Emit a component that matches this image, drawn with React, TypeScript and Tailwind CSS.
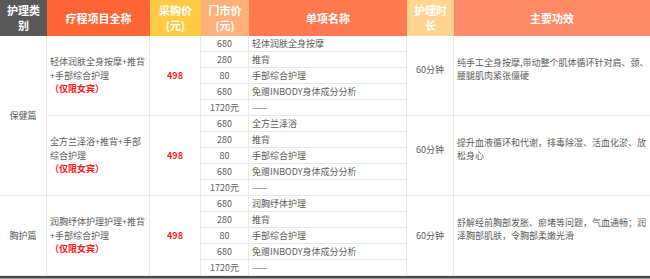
const font = "font-['Noto_Sans_CJK_SC','Noto_Sans',sans-serif]";

interface Group {
  name: string[];
  items: string[];
  prices: string[];
  effect: string[];
  timeUp: boolean;
}

const groups: Group[] = [
  {
    name: ['轻体润肤全身按摩+推背', '+手部综合护理'],
    items: ['轻体润肤全身按摩', '推背', '手部综合护理', '免赠INBODY身体成分分析'],
    prices: ['680', '280', '80', '680'],
    effect: ['纯手工全身按摩,带动整个肌体循环针对肩、颈、', '腰腿肌肉紧张僵硬'],
    timeUp: true,
  },
  {
    name: ['全方兰泽浴+推背+手部', '综合护理'],
    items: ['全方兰泽浴', '推背', '手部综合护理', '免赠INBODY身体成分分析'],
    prices: ['680', '280', '80', '680'],
    effect: ['提升血液循环和代谢，排毒除湿、活血化淤、放', '松身心'],
    timeUp: true,
  },
  {
    name: ['润胸纾体护理护理+推背', '+手部综合护理'],
    items: ['润胸纾体护理', '推背', '手部综合护理', '免赠INBODY身体成分分析'],
    prices: ['680', '280', '80', '680'],
    effect: ['舒解经前胸部发胀、瘀堵等问题，气血通畅；润', '泽胸部肌肤，令胸部柔嫩光滑'],
    timeUp: false,
  },
];

const cell = 'border-b border-r border-[#e8e8e8]';

function Header() {
  const h = 'flex flex-col items-center justify-center text-center text-white font-bold text-[11px] leading-[15px]';
  return (
    <>
      <div className={`${h} bg-[#595959]`}><span>护理类</span><span>别</span></div>
      <div className={`${h} bg-[#ff6535]`}>疗程项目全称</div>
      <div className={`${h} bg-[#ffcb45]`}><span>采购价</span><span>(元)</span></div>
      <div className={`${h} bg-[#ffb07b]`}><span>门市价</span><span>(元)</span></div>
      <div className={`${h} bg-[#ff7a50]`}>单项名称</div>
      <div className={`${h} bg-[#ffd58f]`}><span>护理时</span><span>长</span></div>
      <div className={`${h} bg-[#ff8a68]`}>主要功效</div>
    </>
  );
}

function GroupRows({ g, idx }: { g: Group; idx: number }) {
  const rows = [
    ...g.items.map((it, i) => ({ price: g.prices[i], item: it })),
    { price: '1720元', item: '——' },
  ];
  return (
    <>
      {idx === 0 && (
        <div className={`${cell} row-span-10 flex items-center justify-center`}>保健篇</div>
      )}
      {idx === 2 && (
        <div className={`${cell} row-span-5 flex items-center justify-center`}>胸护篇</div>
      )}
      <div className={`${cell} row-span-5 flex flex-col justify-center pl-[3px] leading-[13.5px]`}>
        <span className="whitespace-nowrap">{g.name[0]}</span>
        <span className="whitespace-nowrap">{g.name[1]}</span>
        <span className="whitespace-nowrap font-bold text-[#ff1a1a]">（仅限女宾）</span>
      </div>
      <div className={`${cell} row-span-5 flex items-center justify-center font-bold text-[#ff1a1a]`}>498</div>
      {rows.map((r, i) => (
        <RowPair key={i} r={r} first={i === 0} g={g} />
      ))}
    </>
  );
}

function RowPair({ r, first, g }: { r: { price: string; item: string }; first: boolean; g: Group }) {
  return (
    <>
      <div className={`${cell} flex items-center justify-center`}>{r.price}</div>
      <div className={`${cell} flex items-center pl-[3px] whitespace-nowrap`}>{r.item}</div>
      {first && (
        <>
          <div className={`${cell} row-span-5 flex items-center justify-center ${g.timeUp ? 'pb-[12px]' : ''}`}>60分钟</div>
          <div className="border-b border-[#e8e8e8] row-span-5 flex flex-col justify-center pl-[3px] pb-[14px] leading-[13px]">
            <span className="whitespace-nowrap">{g.effect[0]}</span>
            <span className="whitespace-nowrap">{g.effect[1]}</span>
          </div>
        </>
      )}
    </>
  );
}

export default function App() {
  return (
    <div className={`w-[650px] h-[279px] bg-white overflow-hidden ${font} text-[9px] text-[#5c5c5c]`}>
      <div className="grid grid-cols-[47px_103px_51px_48px_158px_47px_196px] grid-rows-[36px_repeat(15,16px)]">
        <Header />
        {groups.map((g, i) => (
          <GroupRows key={i} g={g} idx={i} />
        ))}
      </div>
      <div className="h-[2px] bg-[#4a4a4a]" />
      <div className="h-[1px] bg-[#a0a0a0]" />
    </div>
  );
}
